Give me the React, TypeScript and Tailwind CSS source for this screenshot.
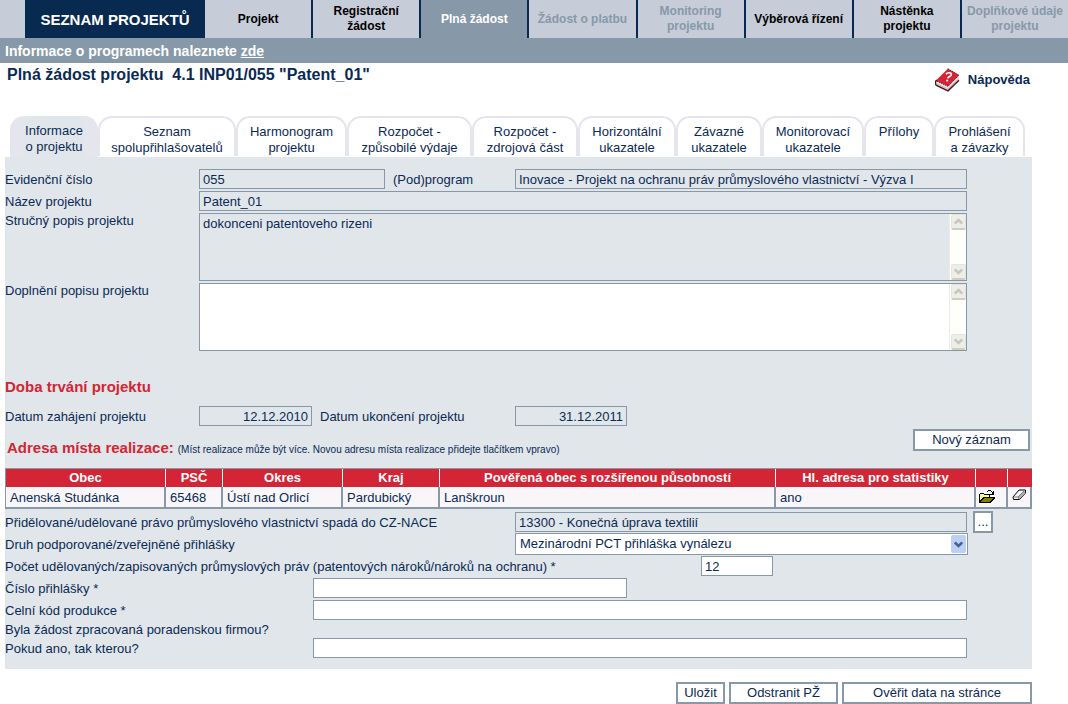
import React from 'react';
import clsx from 'clsx';

const mainMenu = [
    { label: 'Projekt', state: 'normal' },
    { label: 'Registrační žádost', state: 'normal' },
    { label: 'Plná žádost', state: 'active' },
    { label: 'Žádost o platbu', state: 'disabled' },
    { label: 'Monitoring projektu', state: 'disabled' },
    { label: 'Výběrová řízení', state: 'normal' },
    { label: 'Nástěnka projektu', state: 'normal' },
    { label: 'Doplňkové údaje projektu', state: 'disabled' },
];

const tabs = [
    { lines: ['Seznam', 'spolupřihlašovatelů'], width: 'w-[138px]' },
    { lines: ['Harmonogram', 'projektu'], width: 'w-[111px]' },
    { lines: ['Rozpočet -', 'způsobilé výdaje'], width: 'w-[125px]' },
    { lines: ['Rozpočet -', 'zdrojová část'], width: 'w-[106px]' },
    { lines: ['Horizontální', 'ukazatele'], width: 'w-[98px]' },
    { lines: ['Závazné', 'ukazatele'], width: 'w-[86px]' },
    { lines: ['Monitorovací', 'ukazatele'], width: 'w-[102px]' },
    { lines: ['Přílohy'], width: 'w-[70px]' },
    { lines: ['Prohlášení', 'a závazky'], width: 'w-[91px]' },
];

const columns = [
    { title: 'Obec', value: 'Anenská Studánka', width: 'w-[160px]' },
    { title: 'PSČ', value: '65468', width: 'w-[57px]' },
    { title: 'Okres', value: 'Ústí nad Orlicí', width: 'w-[120px]' },
    { title: 'Kraj', value: 'Pardubický', width: 'w-[97px]' },
    { title: 'Pověřená obec s rozšířenou působností', value: 'Lanškroun', width: '' },
    { title: 'Hl. adresa pro statistiky', value: 'ano', width: 'w-[200px]' },
];

const Field: React.FC<React.InputHTMLAttributes<HTMLInputElement>> = ({ className, readOnly, ...props }) => (
    <input
        type="text"
        readOnly={readOnly}
        className={clsx(
            'block h-5 min-w-0 border border-[#8799a8] px-[3px] outline-none',
            readOnly ? 'bg-[#e1e6ea]' : 'bg-white',
            className,
        )}
        {...props}
    />
);

const Label: React.FC<React.LabelHTMLAttributes<HTMLLabelElement>> = ({ className, ...props }) => (
    <label className={clsx('block h-5 leading-[22px]', className)} {...props} />
);

const Button: React.FC<React.ButtonHTMLAttributes<HTMLButtonElement>> = ({ className, ...props }) => (
    <button
        type="button"
        className={clsx('h-[22px] shrink-0 border-2 border-[#8799a8] bg-white leading-[18px]', className)}
        {...props}
    />
);

const ScrollArrow = ({ down = false }) => (
    <button
        type="button"
        tabIndex={-1}
        aria-label={down ? 'Dolů' : 'Nahoru'}
        className="flex h-4 w-[15px] items-center justify-center rounded-xs border border-b-2 border-[#e6e5dc] border-b-[#d0cebd] bg-[#eeeee8]"
    >
        <svg width="9" height="7" viewBox="0 0 9 7" className={down ? 'rotate-180' : ''}>
            <path d="M0.8 5.5 L4.5 2 L8.2 5.5" fill="none" stroke="#c8c7bf" strokeWidth="2.6" />
        </svg>
    </button>
);

const TextBox = ({ id, value, readOnly = false }: { id: string; value?: string; readOnly?: boolean }) => (
    <div className={clsx('flex h-[68px] border border-[#8799a8]', readOnly ? 'bg-[#e1e6ea]' : 'bg-white')}>
        <textarea
            id={id}
            readOnly={readOnly}
            defaultValue={value}
            className="min-w-0 flex-1 resize-none overflow-hidden px-[3px] py-[2px] leading-4 outline-none"
        />
        <div className="flex w-[17px] flex-col items-center justify-between border-l border-[#ecebe6] bg-[#fefefa]">
            <ScrollArrow />
            <ScrollArrow down />
        </div>
    </div>
);

const BookIcon = () => (
    <svg width="25" height="24" viewBox="0 0 25 24">
        <path d="M0.8 13.5 L13 18.5 L23.8 8.5 V12.5 L13 22.8 L1 17.3 Z" fill="#e2e2e2" />
        <path d="M1.5 15.8 L13 20.8 L23.5 11" fill="none" stroke="#b9b9b9" strokeWidth="0.8" />
        <path d="M12.8 0.8 L24 7.2 L13 18.3 L1 12.6 Z" fill="#d32535" />
        <path d="M12.8 0.8 L24 7.2 L13 18.3 L1.5 13" fill="none" stroke="#6d0f1a" strokeWidth="1" strokeDasharray="1.5 0.7" />
        <path d="M1.8 12 C0 13.5 0 16 1.5 17.5 L13 22.8 L24 12.3" fill="none" stroke="#54101a" strokeWidth="1.4" />
        <path d="M11 6.3 C12.5 4 17 4.3 16.2 7 C15.6 8.7 13.2 8.3 12.7 10.4" fill="none" stroke="#fff" strokeWidth="1.7" />
        <path d="M11.2 12.6 H13.2" stroke="#fff" strokeWidth="1.7" />
    </svg>
);

const FolderIcon = () => (
    <svg width="17" height="14" viewBox="0 0 17 14" shapeRendering="crispEdges">
        <rect x="0" y="4" width="1" height="9" fill="#000" />
        <rect x="1" y="3" width="4" height="1" fill="#000" />
        <rect x="5" y="4" width="6" height="1" fill="#000" />
        <rect x="10" y="5" width="1" height="3" fill="#000" />
        <path d="M1 4 H5 V5 H10 V8 H4 L1 12 Z" fill="#fbf76a" />
        <path d="M2 5 h1 v1 h-1 z M4 6 h1 v1 h-1 z M6 5 h1 v1 h-1 z M8 6 h1 v1 h-1 z M2 8 h1 v1 h-1 z" fill="#fff" />
        <path d="M0 13 V12 L4 7 H16 V8 L12 13 Z" fill="#000" />
        <path d="M2 12 L5 8 H14.5 L11 12 Z" fill="#807f00" />
        <path d="M8 1 h1 v1 h-1 z M9 0 h3 v1 h-3 z M12 1 h1 v1 h-1 z M13 2 h1 v1 h-1 z M14 1 h1 v4 h-4 v-1 h2 v-1 h1 z" fill="#000" />
    </svg>
);

const EraserIcon = () => (
    <svg width="15" height="12" viewBox="0 0 15 12">
        <path d="M1 8 L7 1 H13.5 V4 L7.5 10.5 H1.5 Z" fill="#f4f4f4" stroke="#000" strokeLinejoin="round" />
        <path d="M6 8 L12.5 1.5 H13.2 V4 L7.2 10.2 Z" fill="#b0b0b0" />
        <path d="M1.5 8 H6 L12.5 1.5 M6 8 L6.8 10" fill="none" stroke="#555" strokeWidth="0.7" />
    </svg>
);

const App: React.FC = () => {
    return (
        <div className="bg-white font-['Liberation_Sans',Arial,sans-serif] text-[13px] leading-4 text-[#0a2a55]">
            <nav className="flex h-[38px] bg-[#c6ccd8] pl-[25px] text-center text-xs leading-[15px] font-bold">
                <a href="#" className="flex w-[180px] shrink-0 items-center justify-center bg-[#082950] text-[15px] text-white">
                    SEZNAM PROJEKTŮ
                </a>
                {mainMenu.map((item) => (
                    <a
                        key={item.label}
                        href="#"
                        aria-disabled={item.state === 'disabled'}
                        className={clsx(
                            'flex min-w-0 flex-1 items-center justify-center border-r-2 border-[#082950] px-1 last:border-r-0',
                            item.state === 'normal' && 'text-black',
                            item.state === 'active' && 'bg-[#8799a8] text-white',
                            item.state === 'disabled' && 'text-[#8799a8]',
                        )}
                    >
                        {item.label}
                    </a>
                ))}
            </nav>
            <div className="h-[25px] bg-[#8799a8] px-[5px] text-sm leading-[26px] font-bold text-white">
                Informace o programech naleznete <a href="#" className="underline">zde</a>
            </div>

            <div className="mr-9 ml-[5px]">
                <header className="flex h-[53px] items-start justify-between pr-[2px] pl-[2px]">
                    <h1 className="pt-[2px] text-base leading-5 font-bold whitespace-pre">
                        {'Plná žádost projektu  4.1 INP01/055 "Patent_01"'}
                    </h1>
                    <a href="#" className="flex items-center gap-2 pt-[5px] font-bold">
                        <BookIcon />
                        Nápověda
                    </a>
                </header>

                <div role="tablist" className="flex h-[41px] items-start pl-[5px] text-center">
                    <button
                        type="button"
                        role="tab"
                        aria-selected="true"
                        className="flex h-[41px] w-[88px] shrink-0 justify-center rounded-t-[14px] bg-[#e5e5ee]"
                    >
                        <span className="h-full bg-[#e1e6ea] pt-[7px]">
                            Informace
                            <br />o projektu
                        </span>
                    </button>
                    {tabs.map((tab) => (
                        <button
                            key={tab.lines.join(' ')}
                            type="button"
                            role="tab"
                            aria-selected="false"
                            className={clsx(
                                'flex h-10 shrink-0 flex-col items-center rounded-t-[14px] border-2 border-b-0 border-[#e4e5ed] bg-white pt-[6px] whitespace-nowrap',
                                tab.width,
                            )}
                        >
                            {tab.lines.map((line) => (
                                <span key={line}>{line}</span>
                            ))}
                        </button>
                    ))}
                </div>

                <main className="bg-[#e1e6ea] pt-3 pb-[11px]">
                    <div className="mr-[65px] grid grid-cols-[194px_186px_130px_1fr] gap-y-[2px]">
                        <Label htmlFor="cislo">Evidenční číslo</Label>
                        <Field id="cislo" readOnly defaultValue="055" />
                        <Label htmlFor="program" className="pl-2">(Pod)program</Label>
                        <Field id="program" readOnly defaultValue="Inovace - Projekt na ochranu práv průmyslového vlastnictví - Výzva I" />
                        <Label htmlFor="nazev">Název projektu</Label>
                        <Field id="nazev" readOnly defaultValue="Patent_01" className="col-span-3" />
                        <label htmlFor="popis">Stručný popis projektu</label>
                        <div className="col-span-3">
                            <TextBox id="popis" readOnly value="dokonceni patentoveho rizeni" />
                        </div>
                        <label htmlFor="doplneni">Doplnění popisu projektu</label>
                        <div className="col-span-3">
                            <TextBox id="doplneni" />
                        </div>
                    </div>

                    <h2 className="mt-[26px] text-[15px] leading-5 font-bold text-[#d32535]">Doba trvání projektu</h2>
                    <div className="mt-[9px] flex">
                        <Label htmlFor="zahajeni" className="w-[194px]">Datum zahájení projektu</Label>
                        <Field id="zahajeni" readOnly defaultValue="12.12.2010" className="w-[113px] text-right" />
                        <Label htmlFor="ukonceni" className="w-[203px] pl-2">Datum ukončení projektu</Label>
                        <Field id="ukonceni" readOnly defaultValue="31.12.2011" className="w-28 text-right" />
                    </div>

                    <div className="mt-[3px] flex h-[39px] items-start pr-[2px] pl-[2px]">
                        <div className="flex flex-1 items-baseline gap-1 pt-[9px]">
                            <h2 className="text-[15px] leading-5 font-bold text-[#d32535]">Adresa místa realizace:</h2>
                            <span className="text-[10px]">
                                (Míst realizace může být více. Novou adresu místa realizace přidejte tlačítkem vpravo)
                            </span>
                        </div>
                        <Button className="w-[117px]">Nový záznam</Button>
                    </div>

                    <table className="w-full table-fixed border-separate border-spacing-0 border-t border-l border-[#8799a8]">
                        <thead>
                            <tr className="bg-[#d32535] text-white">
                                {columns.map((col) => (
                                    <th key={col.title} className={clsx('h-[18px] border-r border-white p-0 leading-[18px]', col.width)}>
                                        {col.title}
                                    </th>
                                ))}
                                <th className="w-8 border-r border-white p-0" />
                                <th className="w-6 p-0" />
                            </tr>
                        </thead>
                        <tbody className="bg-[#f8f6f8]">
                            <tr>
                                {columns.map((col) => (
                                    <td key={col.title} className="h-[22px] border-r-2 border-b-2 border-[#8799a8] px-1 pt-px pb-0">
                                        {col.value}
                                    </td>
                                ))}
                                <td className="border-r-2 border-b-2 border-[#8799a8] py-0 pl-[3px]">
                                    <button type="button" aria-label="Otevřít" className="block"><FolderIcon /></button>
                                </td>
                                <td className="border-r-2 border-b-2 border-[#8799a8] pt-0 pb-1 pl-1">
                                    <button type="button" aria-label="Smazat" className="block"><EraserIcon /></button>
                                </td>
                            </tr>
                        </tbody>
                    </table>

                    <div className="mt-[2px] flex items-center">
                        <Label htmlFor="nace" className="w-[510px]">
                            Přidělované/udělované právo průmyslového vlastnictví spadá do CZ-NACE
                        </Label>
                        <Field id="nace" readOnly defaultValue="13300 - Konečná úprava textilií" className="flex-1" />
                        <Button className="mr-[39px] ml-[6px] w-5">...</Button>
                    </div>
                    <div className="mr-16 flex items-center">
                        <Label htmlFor="druh" className="w-[510px]">Druh podporované/zveřejněné přihlášky</Label>
                        <div className="relative flex-1">
                            <select id="druh" className="block h-[22px] w-full appearance-none border border-[#8799a8] bg-white px-1 outline-none">
                                <option>Mezinárodní PCT přihláška vynálezu</option>
                            </select>
                            <span className="pointer-events-none absolute top-[2px] right-[2px] flex h-[18px] w-[15px] items-center justify-center rounded-xs bg-[#bccff7]">
                                <svg width="9" height="7" viewBox="0 0 9 7">
                                    <path d="M0.8 1.5 L4.5 5 L8.2 1.5" fill="none" stroke="#4d6185" strokeWidth="2.6" />
                                </svg>
                            </span>
                        </div>
                    </div>
                    <div className="mt-px mr-[65px] grid gap-y-[2px]">
                        <div className="flex">
                            <Label htmlFor="pocet" className="w-[696px]">
                                Počet udělovaných/zapisovaných průmyslových práv (patentových nároků/nároků na ochranu) *
                            </Label>
                            <Field id="pocet" defaultValue="12" className="w-[72px]" />
                        </div>
                        <div className="flex">
                            <Label htmlFor="prihlaska" className="w-[308px]">Číslo přihlášky *</Label>
                            <Field id="prihlaska" className="w-[314px]" />
                        </div>
                        <div className="flex">
                            <Label htmlFor="celni" className="w-[308px]">Celní kód produkce *</Label>
                            <Field id="celni" className="flex-1" />
                        </div>
                        <p className="h-[14px] leading-4">Byla žádost zpracovaná poradenskou firmou?</p>
                        <div className="flex">
                            <Label htmlFor="firma" className="w-[308px]">Pokud ano, tak kterou?</Label>
                            <Field id="firma" className="flex-1" />
                        </div>
                    </div>
                </main>

                <footer className="mt-[13px] flex justify-end gap-1">
                    <Button className="w-[49px]">Uložit</Button>
                    <Button className="w-[109px]">Odstranit PŽ</Button>
                    <Button className="w-[190px]">Ověřit data na stránce</Button>
                </footer>
            </div>
        </div>
    );
};

export default App;
